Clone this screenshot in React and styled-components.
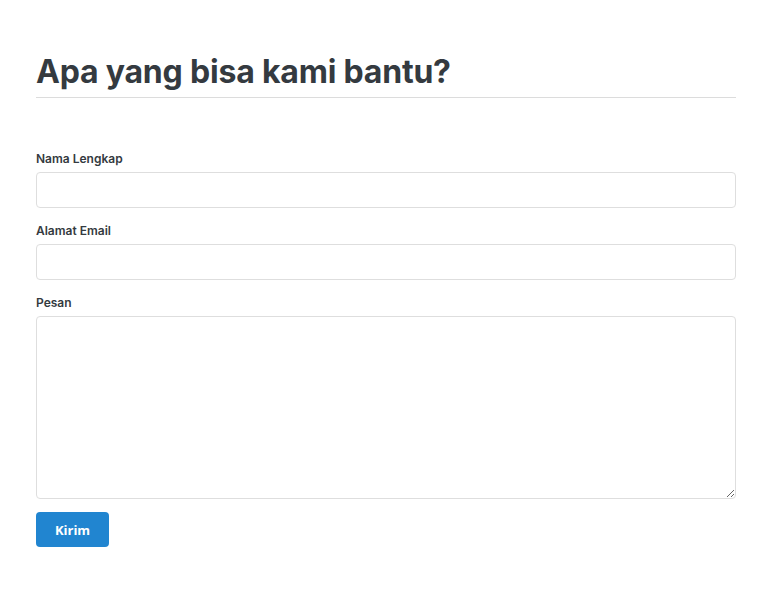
import React from 'react';
import styled, { createGlobalStyle } from 'styled-components';

const GlobalStyle = createGlobalStyle`
  html, body {
    margin: 0;
    padding: 0;
    background: #fff;
  }
  body {
    font-family: Inter, "Noto Sans", sans-serif;
    color: #343a40;
  }
`;

const Page = styled.div`
  padding: 52px 36px 48px 36px;
  width: 700px;
`;

const Heading = styled.h1`
  font-size: 32px;
  font-weight: 700;
  line-height: 40px;
  margin: 0;
  padding-bottom: 5px;
  border-bottom: 1px solid #dcdcdc;
  color: #343a40;
  letter-spacing: -0.2px;
`;

const Form = styled.form`
  display: flex;
  flex-direction: column;
  margin-top: 52px;
`;

const Field = styled.div`
  display: flex;
  flex-direction: column;
  margin-bottom: 14px;
`;

const Label = styled.label`
  font-size: 12px;
  font-weight: 600;
  line-height: 18px;
  margin-bottom: 4px;
  color: #343a40;
`;

const Input = styled.input`
  box-sizing: border-box;
  height: 36px;
  width: 100%;
  border: 1px solid #dedede;
  border-radius: 4px;
  padding: 0 10px;
  font-family: inherit;
  font-size: 14px;
  outline: none;
`;

const TextArea = styled.textarea`
  box-sizing: border-box;
  height: 183px;
  width: 100%;
  border: 1px solid #dedede;
  border-radius: 4px;
  padding: 8px 10px;
  font-family: inherit;
  font-size: 14px;
  outline: none;
  display: block;
`;

const SubmitButton = styled.button`
  align-self: flex-start;
  width: 73px;
  height: 35px;
  margin-top: -1px;
  border: none;
  border-radius: 4px;
  background: #2185d0;
  color: #fff;
  font-family: "Open Sans", sans-serif;
  font-weight: 700;
  font-size: 13px;
  cursor: pointer;
`;

const App = () => (
  <>
    <GlobalStyle />
    <Page>
      <Heading>Apa yang bisa kami bantu?</Heading>
      <Form onSubmit={(e) => e.preventDefault()}>
        <Field>
          <Label htmlFor="nama">Nama Lengkap</Label>
          <Input id="nama" type="text" />
        </Field>
        <Field>
          <Label htmlFor="email">Alamat Email</Label>
          <Input id="email" type="email" />
        </Field>
        <Field>
          <Label htmlFor="pesan">Pesan</Label>
          <TextArea id="pesan" />
        </Field>
        <SubmitButton type="submit">Kirim</SubmitButton>
      </Form>
    </Page>
  </>
);

export default App;
